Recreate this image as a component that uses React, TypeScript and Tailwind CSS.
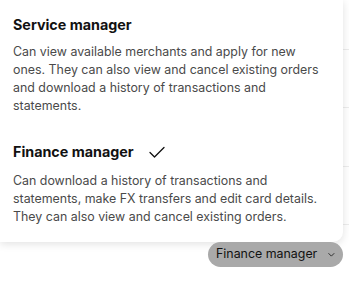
import React from "react";

export default function App() {
  const font = { fontFamily: "Inter, 'Noto Sans', sans-serif" };
  return (
    <div className="relative w-[349px] h-[283px] overflow-hidden bg-white" style={font}>
      {/* table rows behind the menu */}
      <div className="flex flex-col">
        <div className="h-[50px] border-b border-[#ececec]" />
        <div className="h-[58px] border-b border-[#ececec]" />
        <div className="h-[59px] border-b border-[#ececec]" />
        <div className="h-[58px] border-b border-[#ececec]" />
      </div>

      {/* dropdown menu */}
      <div className="absolute left-0 top-0 w-[343px] h-[242px] rounded-br-[10px] bg-white shadow-[0_2px_8px_rgba(0,0,0,0.12)] px-[13px] pt-[15px]">
        <div className="text-[14.3px] leading-[20px] font-bold text-[#111]">Service manager</div>
        <p className="mt-[8px] text-[12.4px] leading-[18px] text-[#4a4a4a]">
          Can view available merchants and apply for new ones. They can also view and cancel existing orders and download a history of transactions and statements.
        </p>
        <div className="mt-[27px] flex items-center gap-[15px]">
          <span className="text-[14.3px] leading-[20px] font-bold text-[#111]">Finance manager</span>
          <svg width="16" height="12" viewBox="0 0 16 12" fill="none">
            <path d="M1 6.5 L5.5 11 L15 1.5" stroke="#111" strokeWidth="1.3" strokeLinecap="round" strokeLinejoin="round" />
          </svg>
        </div>
        <p className="mt-[10px] text-[12.4px] leading-[18px] text-[#4a4a4a]">
          Can download a history of transactions and statements, make FX transfers and edit card details. They can also view and cancel existing orders.
        </p>
      </div>

      {/* trigger */}
      <div className="absolute left-[208px] top-[242px] h-[25px] w-[135px] rounded-full bg-[#a9a9a9] flex items-center pl-[8px] pr-[8px] gap-[11px] whitespace-nowrap">
        <span className="text-[12.4px] leading-none text-[#111]">Finance manager</span>
        <svg width="9" height="6" viewBox="0 0 9 6" fill="none">
          <path d="M1 1 L4.5 4.5 L8 1" stroke="#222" strokeWidth="1.2" strokeLinecap="round" strokeLinejoin="round" />
        </svg>
      </div>
    </div>
  );
}
